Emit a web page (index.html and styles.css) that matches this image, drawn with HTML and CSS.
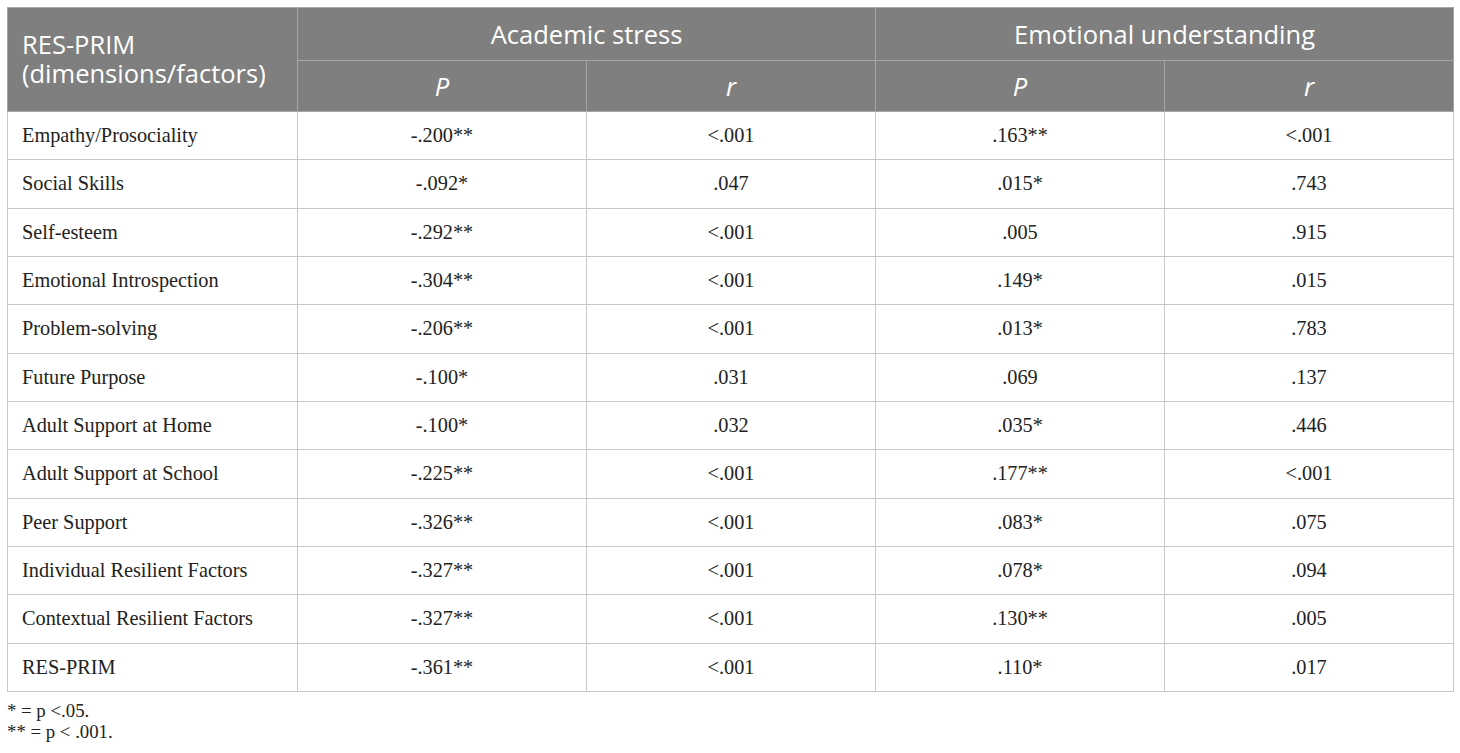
FILE: index.html
```html
<!DOCTYPE html>
<html>
<head>
<meta charset="utf-8">
<link rel="stylesheet" href="styles.css">
</head>
<body>
<table class="tbl">
  <colgroup>
    <col class="c0"><col class="c1"><col class="c2"><col class="c3"><col class="c4">
  </colgroup>
  <thead>
    <tr class="h1">
      <th rowspan="2" class="lead">RES-PRIM<br>(dimensions/factors)</th>
      <th colspan="2">Academic stress</th>
      <th colspan="2">Emotional understanding</th>
    </tr>
    <tr class="h2">
      <th><i>P</i></th><th><i>r</i></th><th><i>P</i></th><th><i>r</i></th>
    </tr>
  </thead>
  <tbody>
    <tr><td>Empathy/Prosociality</td><td>-.200**</td><td>&lt;.001</td><td>.163**</td><td>&lt;.001</td></tr>
    <tr><td>Social Skills</td><td>-.092*</td><td>.047</td><td>.015*</td><td>.743</td></tr>
    <tr><td>Self-esteem</td><td>-.292**</td><td>&lt;.001</td><td>.005</td><td>.915</td></tr>
    <tr><td>Emotional Introspection</td><td>-.304**</td><td>&lt;.001</td><td>.149*</td><td>.015</td></tr>
    <tr><td>Problem-solving</td><td>-.206**</td><td>&lt;.001</td><td>.013*</td><td>.783</td></tr>
    <tr><td>Future Purpose</td><td>-.100*</td><td>.031</td><td>.069</td><td>.137</td></tr>
    <tr><td>Adult Support at Home</td><td>-.100*</td><td>.032</td><td>.035*</td><td>.446</td></tr>
    <tr><td>Adult Support at School</td><td>-.225**</td><td>&lt;.001</td><td>.177**</td><td>&lt;.001</td></tr>
    <tr><td>Peer Support</td><td>-.326**</td><td>&lt;.001</td><td>.083*</td><td>.075</td></tr>
    <tr><td>Individual Resilient Factors</td><td>-.327**</td><td>&lt;.001</td><td>.078*</td><td>.094</td></tr>
    <tr><td>Contextual Resilient Factors</td><td>-.327**</td><td>&lt;.001</td><td>.130**</td><td>.005</td></tr>
    <tr><td>RES-PRIM</td><td>-.361**</td><td>&lt;.001</td><td>.110*</td><td>.017</td></tr>
  </tbody>
</table>
<div class="notes">
  <p>* = p &lt;.05.</p>
  <p>** = p &lt; .001.</p>
</div>
</body>
</html>
```
FILE: styles.css
```css
html, body {
  margin: 0;
  padding: 0;
  background: #ffffff;
}
body {
  padding: 7px 0 0 7px;
  font-family: "Liberation Serif", "Times New Roman", serif;
  color: #1a1a1a;
}
.tbl {
  border-collapse: collapse;
  table-layout: fixed;
  width: 1446px;
}
.c0 { width: 290px; }
.c1 { width: 289px; }
.c2 { width: 289px; }
.c3 { width: 289px; }
.c4 { width: 289px; }
.tbl th {
  background: #7f7f7f;
  color: #ffffff;
  font-family: "Open Sans", "Liberation Sans", sans-serif;
  font-weight: 400;
  font-size: 25.5px;
  line-height: 29px;
  border: 1px solid #a6a6a6;
  padding: 0;
  text-align: center;
  vertical-align: middle;
}
.tbl th i {
  font-style: italic;
}
.tbl th.lead {
  text-align: left;
  padding-left: 14px;
  line-height: 29px;
  padding-bottom: 2px;
}
.tbl tr.h1 th { height: 52px; }
.tbl tr.h2 th { height: 50px; }
.tbl td {
  border: 1px solid #c8c8c8;
  height: 47.33px;
  padding: 0;
  font-size: 20.3px;
  text-align: center;
  vertical-align: middle;
  color: #222222;
}
.tbl td:first-child {
  text-align: left;
  padding-left: 14px;
}
.notes {
  margin-top: 8px;
  font-size: 18.8px;
  line-height: 21px;
  color: #222222;
}
.notes p {
  margin: 0;
}
```
